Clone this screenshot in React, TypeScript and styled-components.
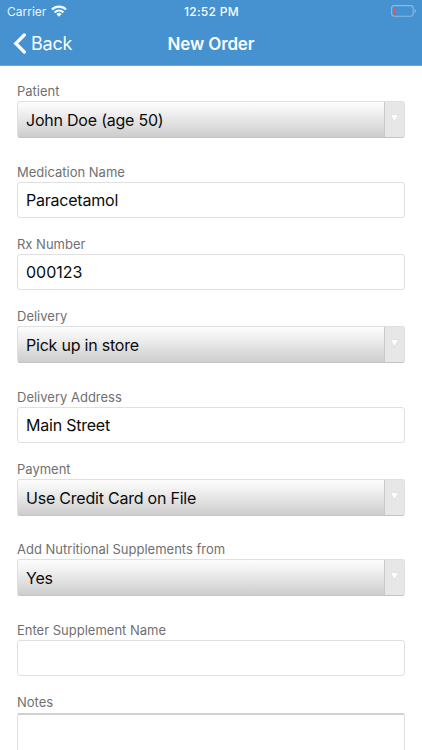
import React from "react";
import styled, { createGlobalStyle } from "styled-components";

const GlobalStyle = createGlobalStyle`
  * { box-sizing: border-box; }
  body { margin: 0; background: #fff; overflow: hidden; }
`;

const Screen = styled.div`
  width: 422px;
  height: 750px;
  overflow: hidden;
  display: flex;
  flex-direction: column;
  background: #fff;
  font-family: Inter, "Liberation Sans", sans-serif;
`;

const Header = styled.header`
  flex: none;
  height: 66px;
  background: #4691cf;
  border-bottom: 1px solid #6fa8d6;
  color: #f8fdff;
`;

const StatusBar = styled.div`
  height: 22px;
  padding: 0 6px 0 7px;
  display: grid;
  grid-template-columns: 1fr auto 1fr;
  align-items: center;
`;

const Carrier = styled.div`
  display: flex;
  align-items: center;
  gap: 5px;
  font-size: 12px;
  letter-spacing: 0;
  color: #e8f4fc;
`;

const Clock = styled.div`
  font-size: 12px;
  font-weight: 500;
  letter-spacing: 0.3px;
`;

const BatteryIcon = styled.svg`
  justify-self: end;
  margin-top: -1px;
`;

const NavBar = styled.div`
  height: 43px;
  padding: 0 13px;
  display: grid;
  grid-template-columns: 1fr auto 1fr;
  align-items: center;
`;

const BackButton = styled.button`
  display: flex;
  align-items: center;
  gap: 4px;
  padding: 0;
  border: 0;
  background: none;
  color: inherit;
  font: 400 18px Inter, sans-serif;
  letter-spacing: -0.2px;
`;

const Title = styled.h1`
  margin: 0;
  font-size: 17px;
  font-weight: 600;
  letter-spacing: -0.15px;
`;

const Form = styled.form`
  flex: 1;
  min-height: 0;
  padding: 16px 17px 0;
`;

const Field = styled.div<{ $height: number }>`
  height: ${(p) => p.$height}px;
`;

const Label = styled.label`
  display: block;
  height: 19px;
  line-height: 19px;
  font-size: 13px;
  color: #707070;
  white-space: nowrap;
`;

const Box = styled.div<{ $select?: boolean }>`
  display: flex;
  height: ${(p) => (p.$select ? 37 : 36)}px;
  line-height: ${(p) => (p.$select ? 36 : 35)}px;
  border: 1px solid #e0e0e0;
  border-radius: 3px;
  overflow: hidden;
  background: ${(p) => (p.$select ? "linear-gradient(#fdfdfd, #f3f3f3 25%, #cdcdcd)" : "#fff")};
  border-bottom-color: ${(p) => (p.$select ? "#c4c4c4" : "#e0e0e0")};
`;

const Value = styled.span<{ $numeric?: boolean }>`
  flex: 1;
  padding-left: 8px;
  font-size: 16px;
  letter-spacing: ${(p) => (p.$numeric ? 0 : -0.22)}px;
  color: #0b0b0b;
  white-space: nowrap;
`;

const Arrow = styled.span`
  width: 20px;
  display: flex;
  justify-content: center;
  padding: 12px 1px 0 0;
  border-left: 1px solid #c9c9c9;
  background: #e7e7e7;
`;

const Notes = styled.div`
  height: 60px;
  margin-top: 1px;
  border: 1px solid #e0e0e0;
  border-top: 2px solid #d0d0d0;
  border-radius: 2px;
`;

type Item = { label: string; value: string; select?: boolean; numeric?: boolean; height: number };

const items: Item[] = [
  { label: "Patient", value: "John Doe (age 50)", select: true, height: 81 },
  { label: "Medication Name", value: "Paracetamol", height: 72 },
  { label: "Rx Number", value: "000123", numeric: true, height: 72 },
  { label: "Delivery", value: "Pick up in store", select: true, height: 81 },
  { label: "Delivery Address", value: "Main Street", height: 72 },
  { label: "Payment", value: "Use Credit Card on File", select: true, height: 80 },
  { label: "Add Nutritional Supplements from", value: "Yes", select: true, height: 81 },
  { label: "Enter Supplement Name", value: "", height: 72 },
];

export default function App() {
  return (
    <Screen>
      <GlobalStyle />
      <Header>
        <StatusBar>
          <Carrier>
            Carrier
            <svg width="16" height="12" viewBox="0 0 15 11" fill="none" stroke="#f4fbff" strokeWidth="2">
              <path d="M.9 4.2a9.3 9.3 0 0 1 13.2 0M3.3 6.8a5.9 5.9 0 0 1 8.4 0" />
              <path d="M5 8.4a3.5 3.5 0 0 1 5 0L7.5 11z" fill="#f4fbff" stroke="none" />
            </svg>
          </Carrier>
          <Clock>12:52 PM</Clock>
          <BatteryIcon width="25" height="12" viewBox="0 0 25 12">
            <rect x=".6" y=".6" width="21.6" height="10.6" rx="2.6" fill="none" stroke="#88bae2" strokeWidth="1.1" />
            <rect x="2.2" y="2.4" width="2" height="7" rx=".7" fill="#d85a68" />
            <path d="M23.6 4v4q1.2-.6 1.2-2t-1.2-2" fill="#9cc8e8" />
          </BatteryIcon>
        </StatusBar>
        <NavBar>
          <BackButton type="button">
            <svg width="14" height="21" viewBox="0 0 14 21" fill="none" stroke="#f8fdff" strokeWidth="3.3" strokeLinecap="round">
              <path d="M11.3 2 2.8 10.5l8.5 8.5" />
            </svg>
            Back
          </BackButton>
          <Title>New Order</Title>
        </NavBar>
      </Header>
      <Form>
        {items.map((f) => (
          <Field key={f.label} $height={f.height}>
            <Label>{f.label}</Label>
            <Box $select={f.select}>
              <Value $numeric={f.numeric}>{f.value}</Value>
              {f.select && (
                <Arrow>
                  <svg width="9" height="8" viewBox="0 0 9 8">
                    <path d="M.4.5h8.2L4.5 7.6z" fill="#fff" stroke="#d0d0d0" strokeWidth=".5" />
                  </svg>
                </Arrow>
              )}
            </Box>
          </Field>
        ))}
        <Label>Notes</Label>
        <Notes />
      </Form>
    </Screen>
  );
}
